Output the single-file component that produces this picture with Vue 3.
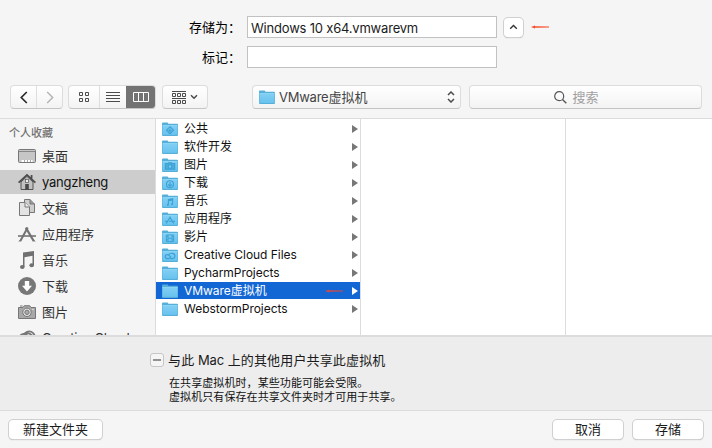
<script setup>
const favorites = [
  { name: '桌面', icon: 'desktop' },
  { name: 'yangzheng', icon: 'home', latin: true, selected: true },
  { name: '文稿', icon: 'documents' },
  { name: '应用程序', icon: 'apps' },
  { name: '音乐', icon: 'music' },
  { name: '下载', icon: 'download' },
  { name: '图片', icon: 'camera' },
  { name: 'Creative Cloud', icon: 'cloud', latin: true },
]

const folders = [
  { cjk: '公共', badge: 'public' },
  { cjk: '软件开发' },
  { cjk: '图片', badge: 'pictures' },
  { cjk: '下载', badge: 'downloads' },
  { cjk: '音乐', badge: 'music' },
  { cjk: '应用程序', badge: 'apps' },
  { cjk: '影片', badge: 'movies' },
  { latin: 'Creative Cloud Files', badge: 'cloud' },
  { latin: 'PycharmProjects' },
  { latin: 'VMware', cjk: '虚拟机', selected: true },
  { latin: 'WebstormProjects' },
]
</script>

<template>
  <div class="dialog">
    <svg class="defs" aria-hidden="true">
      <defs>
        <linearGradient id="folder-fill" x1="0" y1="0" x2="0" y2="1">
          <stop offset="0" stop-color="#82cff4" />
          <stop offset="1" stop-color="#68c2ee" />
        </linearGradient>
        <symbol id="folder" viewBox="0 0 16 14">
          <path d="M0 1.5Q0 .5 1 .5H5.3Q6 .5 6.4 1.8H15Q16 1.8 16 2.8V13Q16 14 15 14H1Q0 14 0 13Z" fill="#55afd9" />
          <path d="M.5 3.5H15.5V12.9H.5Z" fill="url(#folder-fill)" />
          <path d="M.5 3.5H15.5" stroke="#9bdcf8" stroke-width=".7" />
        </symbol>
      </defs>
    </svg>

    <section class="form">
      <label for="filename">存储为：</label>
      <div id="filename" class="field"><span class="latin filename">Windows 10 x64.vmwarevm</span></div>
      <button class="collapse" aria-label="collapse">
        <svg width="9" height="6" viewBox="0 0 9 6"><path d="M1.2 4.7 4.5 1.5 7.8 4.7" fill="none" stroke="#333" stroke-width="1.4" /></svg>
      </button>
      <svg class="form-mark" width="18" height="4" viewBox="0 0 18 4"><path d="M0 2 4 .4V1.2L18 1.6V2.4L4 2.8V3.5Z" fill="#f94c29" /></svg>
      <label for="tags">标记：</label>
      <div id="tags" class="field"></div>
    </section>

    <nav class="toolbar">
      <div class="control nav-pair">
        <button class="nav"><svg width="8" height="13" viewBox="0 0 8 13"><path d="M6.8 1 1.3 6.5 6.8 12" fill="none" stroke="#292929" stroke-width="1.7" /></svg></button>
        <button class="nav forward"><svg width="8" height="13" viewBox="0 0 8 13"><path d="M1.2 1 6.7 6.5 1.2 12" fill="none" stroke="#b5b5b5" stroke-width="1.5" /></svg></button>
      </div>
      <div class="control views">
        <button class="view grid">
          <svg width="10" height="10" viewBox="0 0 10 10"><path d="M.5.5h3v3h-3zM6.5.5h3v3h-3zM.5 6.5h3v3h-3zM6.5 6.5h3v3h-3z" fill="none" stroke="#4c4c4c" /></svg>
        </button>
        <button class="view list">
          <svg width="14" height="10" viewBox="0 0 14 10"><path d="M0 .5h14M0 3.5h14M0 6.5h14M0 9.5h14" stroke="#4c4c4c" /></svg>
        </button>
        <button class="view columns">
          <svg width="16" height="10" viewBox="0 0 16 10"><path d="M.5.5h15v9H.5zM5.5.5v9M10.5.5v9" fill="none" stroke="#fff" /></svg>
        </button>
      </div>
      <button class="control group">
        <svg width="14" height="13" viewBox="0 0 14 13"><path d="M0 .5h14M0 7.5h14" stroke="#4c4c4c" /><path d="M.5 2.5h3v3h-3zM5.5 2.5h3v3h-3zM10.5 2.5h3v3h-3zM.5 9.5h3v3h-3zM5.5 9.5h3v3h-3zM10.5 9.5h3v3h-3z" fill="none" stroke="#4c4c4c" /></svg>
        <svg width="8" height="6" viewBox="0 0 8 6"><path d="M1 1.2 4 4.2 7 1.2" fill="none" stroke="#4c4c4c" stroke-width="1.5" /></svg>
      </button>
      <div class="control location">
        <svg width="16" height="14"><use href="#folder" /></svg>
        <span class="location-name"><span class="latin">VMware</span>虚拟机</span>
        <svg class="updown" width="8" height="12" viewBox="0 0 8 12"><path d="M1 4 4 1 7 4M1 8 4 11 7 8" fill="none" stroke="#4c4c4c" stroke-width="1.5" /></svg>
      </div>
      <div class="control search">
        <svg width="13" height="13" viewBox="0 0 13 13"><circle cx="5.2" cy="5.2" r="4.5" fill="none" stroke="#555" stroke-width="1.2" /><path d="M8.5 8.5 12.3 12.3" stroke="#555" stroke-width="1.4" /></svg>
        <span>搜索</span>
      </div>
    </nav>

    <main class="browser">
      <aside class="sidebar">
        <h2>个人收藏</h2>
        <div v-for="item in favorites" :key="item.name" class="favorite" :class="{ selected: item.selected }">
          <svg class="favorite-icon" width="18" height="18" viewBox="0 0 18 18">
            <g v-if="item.icon === 'desktop'">
              <rect x=".5" y="2.5" width="17" height="13" rx="1" fill="#c6c6c6" stroke="#777" />
              <path d="M1 4.5H17" stroke="#888" /><path d="M3.5 14h11" stroke="#fff" stroke-width="2" /><path d="M6.5 13v2M9.5 13v2M12.5 13v2" stroke="#aaa" />
            </g>
            <g v-else-if="item.icon === 'home'">
              <path d="M3 9 9 3.4 15 9V16.5H3Z" fill="#c1c1c1" stroke="#555" />
              <path d="M.6 9.7 9 1.8 17.4 9.7M13.6 6V2" fill="none" stroke="#4b4b4b" stroke-width="1.7" />
              <path d="M7.2 17V11H10.8V17Z" fill="#484848" /><rect x="7.5" y="6.4" width="3" height="3" fill="#eee" stroke="#555" stroke-width=".7" />
            </g>
            <g v-else-if="item.icon === 'documents'" stroke="#777">
              <path d="M6.5 .5H12L16.5 5V13.5H6.5Z" fill="#cecece" /><path d="M12 .5V5H16.5" fill="#999" />
              <path d="M1.5 3.5H7L11.5 8V16.5H1.5Z" fill="#e3e3e3" /><path d="M7 3.5V8H11.5" fill="#eee" />
            </g>
            <g v-else-if="item.icon === 'apps'" fill="none" stroke="#737373">
              <path d="M2.2 16.2 9.7 2.6" stroke-width="2" /><path d="M7.8 2.6 15.8 16.2" stroke-width="2.2" />
              <path d="M0 11H18" stroke-width="1.6" /><path d="M1 16.7 2.3 14.8M17 16.7 15.6 14.8" />
            </g>
            <g v-else-if="item.icon === 'music'" fill="#707070">
              <path d="M5 1.6 16 0V14.3H14.5V4.8L6.5 6.2V16H5Z" /><ellipse cx="4.3" cy="15.9" rx="2.3" ry="2" /><ellipse cx="13.7" cy="14.3" rx="2.3" ry="2" />
            </g>
            <g v-else-if="item.icon === 'download'">
              <circle cx="9" cy="9" r="9" fill="#777" /><path d="M6.8 4H11.2V8.8H14L9 14.5 4 8.8H6.8Z" fill="#fff" />
            </g>
            <g v-else-if="item.icon === 'camera'">
              <path d="M.5 4.5H5L6.3 2.7H11.7L13 4.5H17.5V15.5H.5Z" fill="#a8a8a8" stroke="#777" /><path d="M2 3H4.7" stroke="#777" />
              <circle cx="9" cy="9.3" r="4.2" fill="#e5e5e5" stroke="#737373" /><circle cx="9" cy="9.3" r="2.2" fill="#aaa" stroke="#777" /><circle cx="15" cy="6.5" r=".7" fill="#eee" />
            </g>
            <g v-else fill="none" stroke="#777" stroke-width="1.8">
              <circle cx="11.2" cy="8" r="5.6" /><path d="M6 14A4.6 4.6 0 1 1 9.5 6.5" /><path d="M6 5Q10 2.5 14 6.5" />
            </g>
          </svg>
          <span :class="{ latin: item.latin }">{{ item.name }}</span>
        </div>
      </aside>

      <div class="column files">
        <div v-for="(folder, index) in folders" :key="index" class="folder" :class="{ selected: folder.selected }">
          <svg class="folder-icon" width="16" height="14" viewBox="0 0 16 14">
            <use href="#folder" width="16" height="14" />
            <g fill="none" stroke="#3ba0d3" stroke-width="1.1">
              <path v-if="folder.badge === 'public'" d="M8 4.7 11.5 8.2 8 11.7 4.5 8.2ZM8 6.5V9.9M6.3 8.2H9.7" />
              <g v-else-if="folder.badge === 'pictures'"><path d="M3.3 5.5H6L6.8 4.7H9.2L10 5.5H12.7V11.2H3.3Z" fill="#4aaddd" /><circle cx="8" cy="8.4" r="1.8" fill="#7bcaf0" /></g>
              <g v-else-if="folder.badge === 'downloads'"><circle cx="8" cy="8.3" r="3.5" /><path d="M8 6V10M6.2 8.5 8 10.3 9.8 8.5" /></g>
              <g v-else-if="folder.badge === 'music'"><path d="M6.4 10.5V5.7L10.6 4.8V9.8M6.4 6.8 10.6 5.9" /><path d="M5 10.8H6.7M9.2 10.1H10.9" stroke-width="1.7" /></g>
              <path v-else-if="folder.badge === 'apps'" d="M4.2 11.5 8.4 4.8M7.6 4.8 11.8 11.5M3 9.2H6M7 9.2H13" />
              <path v-else-if="folder.badge === 'movies'" d="M4.4 4.9H11.6V11.6H4.4ZM6 5V11.5M10 5V11.5M6 8.2H10M4.4 6.7H6M4.4 9.7H6M10 6.7H11.6M10 9.7H11.6" stroke-width=".9" />
              <path v-else-if="folder.badge === 'cloud'" d="M7.2 10.6H5.2A2 2 0 0 1 5.2 6.6Q6.4 6.6 7.4 7.7L9.2 9.4M6.8 6.6Q8 5 10.2 5.4A2.6 2.6 0 0 1 10.4 10.6H9.2Q8.2 10.6 7.2 9.4" />
            </g>
          </svg>
          <span class="folder-name"><span v-if="folder.latin" class="latin">{{ folder.latin }}</span>{{ folder.cjk }}</span>
          <svg v-if="folder.selected" class="row-mark" width="18" height="4" viewBox="0 0 18 4"><path d="M0 2 4 .4V1.2L18 1.6V2.4L4 2.8V3.5Z" fill="#d24a48" /></svg>
          <svg class="arrow" width="6" height="8" viewBox="0 0 6 8"><path d="M0 0 6 4 0 8Z" fill="currentColor" /></svg>
        </div>
      </div>
      <div class="column"></div>
      <div class="column last"></div>
    </main>

    <section class="sharing">
      <div class="share-option">
        <span class="checkbox"><i></i></span>
        <span class="share-label">与此 <span class="latin">Mac</span> 上的其他用户共享此虚拟机</span>
      </div>
      <p>在共享虚拟机时，某些功能可能会受限。<br>虚拟机只有保存在共享文件夹时才可用于共享。</p>
    </section>

    <footer class="actions">
      <button class="push new-folder">新建文件夹</button>
      <button class="push">取消</button>
      <button class="push">存储</button>
    </footer>
  </div>
</template>

<style>
body { margin: 0; overflow: hidden; }
</style>

<style scoped>
* { box-sizing: border-box; }
.dialog { width: 712px; height: 448px; overflow: hidden; display: flex; flex-direction: column; background: #f5f5f5; color: #1b1b1b; font: 13px/18px Inter, "Noto Sans CJK SC", sans-serif; }
.defs { position: absolute; width: 0; height: 0; }
svg { display: block; flex: none; }
button { margin: 0; padding: 0; border: 0; font: inherit; color: inherit; background: none; }
.latin { letter-spacing: -.25px; }

.form { height: 85px; padding-top: 16px; display: grid; grid-template-columns: 241px 249px 21px 18px; grid-auto-rows: 22px; row-gap: 8px; align-content: start; align-items: center; }
.form label { text-align: right; color: #000; }
.field { height: 22px; margin-left: 6px; width: 250px; padding: 1px 0 0 3px; background: #fff; border: 1px solid #c1c1c1; line-height: 20px; }
.filename { letter-spacing: -.2px; }
.collapse { width: 19px; height: 19px; margin-left: 14px; display: flex; align-items: center; justify-content: center; background: #fff; border-radius: 4px; box-shadow: 0 0 0 1px #d0d0d0, 0 1px 1px #aaa; }
.form-mark { margin-left: 20px; }

.toolbar { height: 33px; display: flex; align-items: flex-start; }
.control { height: 24px; display: flex; border: 1px solid #dcdcdc; border-bottom-color: #c4c4c4; border-radius: 4px; background: linear-gradient(#fff, #f3f3f3); overflow: hidden; }
.nav-pair { width: 53px; margin-left: 10px; }
.nav { width: 26px; display: flex; align-items: center; justify-content: center; }
.forward { border-left: 1px solid #ddd; }
.views { width: 88px; margin-left: 5px; }
.view { display: flex; align-items: center; justify-content: center; height: 24px; margin-top: -1px; }
.grid { width: 30px; }
.list { width: 28px; border-left: 1px solid #ddd; }
.columns { width: 30px; margin-right: -1px; background: #737373; padding-right: 1px; }
.group { width: 46px; margin-left: 6px; align-items: center; justify-content: center; gap: 4px; }
.location { width: 209px; margin-left: 44px; padding: 0 5px 0 6px; align-items: center; color: #444; }
.location-name { margin-left: 4px; flex: 1; }
.search { width: 233px; margin-left: 8px; align-items: center; justify-content: center; gap: 5px; padding: 0 18px 0 0; color: #a0a0a0; }

.browser { height: 219px; display: flex; border-top: 1px solid #dcdcdc; border-bottom: 2px solid #dcdcdc; overflow: hidden; background: #fff; }
.sidebar { width: 156px; height: 216px; overflow: hidden; background: #f5f5f5; border-right: 1px solid #dcdcdc; }
.sidebar h2 { height: 24px; margin: 0; padding: 5px 0 0 9px; font-size: 11px; font-weight: 500; line-height: 18px; color: #717171; }
.favorite { height: 24px; margin: 1px 0 2px; padding-left: 18px; display: flex; align-items: center; gap: 6px; color: #333; white-space: nowrap; }
.favorite.selected { background: #cdcdcd; color: #111; }
.column { width: 205px; flex: none; border-right: 1px solid #dcdcdc; }
.column.last { width: 146px; border: 0; }
.folder { height: 17px; margin-top: 1px; padding: 0 2px 0 6px; display: flex; align-items: center; color: #111; font-size: 12px; line-height: 17px; }
.folder-name { margin-left: 6px; flex: 1; white-space: nowrap; }
.folder .latin { letter-spacing: -.04px; }
.arrow { color: #777; }
.folder.selected { background: #1367d5; color: #fff; }
.folder.selected .arrow { color: #fff; }
.row-mark { margin-right: 9px; }

.sharing { height: 74px; padding: 14px 0 0 150px; background: #ededed; border-bottom: 1px solid #dcdcdc; }
.share-option { display: flex; align-items: center; gap: 4px; }
.share-label { letter-spacing: .15px; }
.checkbox { width: 14px; height: 14px; display: flex; align-items: center; justify-content: center; background: #f5f5f5; border: 1px solid #c6c6c6; border-radius: 3px; }
.checkbox i { width: 8px; height: 2px; background: #929292; }
.sharing p { margin: 7px 0 0 19px; font-size: 11px; line-height: 14px; letter-spacing: .08px; color: #111; }

.actions { height: 37px; padding: 9px 9px 0 9px; display: flex; gap: 10px; }
.push { width: 70px; height: 19px; line-height: 19px; text-align: center; background: #fff; border-radius: 4px; box-shadow: 0 0 0 1px #d0d0d0, 0 1px 1px #aaa; }
.new-folder { width: 93px; margin-right: auto; }
</style>
